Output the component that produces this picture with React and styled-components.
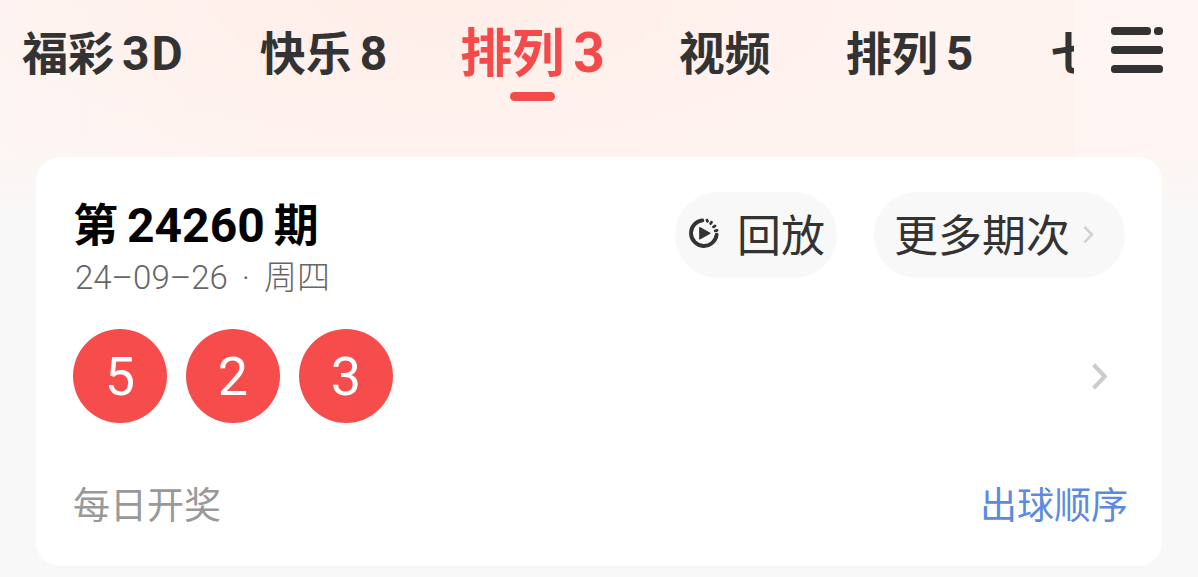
import React from "react";
import styled, { createGlobalStyle } from "styled-components";

const GlobalStyle = createGlobalStyle`
  html, body {
    margin: 0;
    padding: 0;
    background: #f8f8f8;
  }
  body {
    font-family: Roboto, "Noto Sans CJK SC", sans-serif;
  }
`;

//Data
const tabs = [
  { name: "福彩", num: "3D" },
  { name: "快乐", num: "8" },
  { name: "排列", num: "3", active: true },
  { name: "视频" },
  { name: "排列", num: "5" },
  { name: "七乐彩" },
];
const balls = ["5", "2", "3"];

const Chevron = ({ size, color }) => (
  <svg width={size} height={size * 1.6} viewBox="0 0 10 16" fill="none">
    <path d="M2 1.5 L8.2 8 L2 14.5" stroke={color} strokeWidth="2.3" />
  </svg>
);

const ReplayIcon = () => (
  <svg width="30" height="30" viewBox="3 3 28 28" fill="none">
    <path
      d="M15.5 5.2 A12 12 0 1 0 28.8 18.5"
      stroke="#333"
      strokeWidth="3.6"
      strokeLinecap="round"
    />
    <path
      d="M13 11.8 L22.6 17.2 L13 22.6 Z"
      fill="#333"
      stroke="#333"
      strokeWidth="1"
      strokeLinejoin="round"
    />
    <path
      d="M19.8 5 L20.3 6.1 M24 6.9 L23.2 8.2 M27.3 10.4 L25.9 11.3 M29.2 14.6 L27.5 15"
      stroke="#333"
      strokeWidth="2.6"
      strokeLinecap="round"
    />
  </svg>
);

const MenuIcon = () => (
  <svg width="52" height="46" viewBox="0 0 52 46" fill="#333">
    <rect x="0" y="0" width="40" height="8" rx="3.5" />
    <rect x="43" y="0" width="9" height="8" rx="3.5" />
    <rect x="0" y="19" width="52" height="8" rx="3.5" />
    <rect x="0" y="38" width="52" height="8" rx="3.5" />
  </svg>
);

const App = () => {
  return (
    <Page>
      <GlobalStyle />
      <Header>
        <TabScroller>
          {tabs.map((tab, i) => (
            <Tab key={i} $active={tab.active}>
              {tab.name}
              {tab.num && <TabNum $active={tab.active}>{tab.num}</TabNum>}
              {tab.active && <TabBar />}
            </Tab>
          ))}
        </TabScroller>
        <MenuArea>
          <MenuIcon />
        </MenuArea>
      </Header>
      <Card>
        <TopRow>
          <div>
            <Issue>
              第<IssueNum>24260</IssueNum>期
            </Issue>
            <DateLine>
              24–09–26<DateDot>·</DateDot>周四
            </DateLine>
          </div>
          <Actions>
            <Pill $pad="0 12px 4px 14px">
              <ReplayIcon />
              回放
            </Pill>
            <Pill $pad="0 55px 4px 20px">
              更多期次
              <PillArrow>
                <Chevron size={12} color="#d2d2d2" />
              </PillArrow>
            </Pill>
          </Actions>
        </TopRow>
        <BallRow>
          <Balls>
            {balls.map((b, i) => (
              <Ball key={i}>{b}</Ball>
            ))}
          </Balls>
          <Chevron size={18} color="#cccccc" />
        </BallRow>
        <Footer>
          <Daily>每日开奖</Daily>
          <OrderLink>出球顺序</OrderLink>
        </Footer>
      </Card>
    </Page>
  );
};

const Page = styled.div`
  width: 1198px;
  height: 577px;
  overflow: hidden;
  background: linear-gradient(180deg, #fef4f1 0, #fdf6f3 157px, #f8f8f8 215px);
`;

const Header = styled.div`
  display: flex;
  height: 157px;
  background: radial-gradient(
      ellipse 480px 170px at 440px 0,
      #ffeee8 0,
      rgba(255, 240, 235, 0) 100%
    ),
    linear-gradient(90deg, rgba(255, 244, 241, 0) 0, #fff3f0 260px);
`;

const TabScroller = styled.div`
  width: 1074px;
  display: flex;
  flex-shrink: 0;
  gap: 75px;
  padding-left: 22px;
  box-sizing: border-box;
  overflow: hidden;
`;

const Tab = styled.div`
  position: relative;
  flex-shrink: 0;
  height: 104px;
  line-height: 100px;
  white-space: nowrap;
  font-family: "Noto Sans CJK SC", sans-serif;
  font-weight: 700;
  font-size: ${(p) => (p.$active ? "52px" : "46px")};
  color: ${(p) => (p.$active ? "#f54a4a" : "#333333")};
  margin: ${(p) => (p.$active ? "0 -1px 0 -4px" : "0")};
`;

const TabNum = styled.span`
  font-family: Roboto, sans-serif;
  font-size: ${(p) => (p.$active ? "55px" : "48px")};
  letter-spacing: ${(p) => (p.$active ? "0" : "2px")};
  margin-left: ${(p) => (p.$active ? "9px" : "8px")};
`;

const TabBar = styled.div`
  position: absolute;
  left: 50px;
  bottom: 3px;
  width: 45px;
  height: 9px;
  border-radius: 5px;
  background: #f54a4a;
`;

const MenuArea = styled.div`
  flex: 1;
  display: flex;
  justify-content: flex-end;
  align-items: flex-start;
  padding: 27px 35px 0 0;
  background: #fff5f3;
  height: 130px;
`;

const Card = styled.div`
  margin: 0 36px;
  height: 409px;
  box-sizing: border-box;
  padding: 34px 37px 0;
  background: #fff;
  border-radius: 24px;
`;

const TopRow = styled.div`
  display: flex;
  justify-content: space-between;
  align-items: flex-start;
`;

const Issue = styled.div`
  font-family: "Noto Sans CJK SC", sans-serif;
  font-weight: 700;
  font-size: 45px;
  line-height: 64px;
  color: #000;
`;

const IssueNum = styled.span`
  font-family: Roboto, sans-serif;
  font-size: 48px;
  margin: 0 9px;
`;

const DateLine = styled.div`
  font-size: 33px;
  font-weight: 300;
  line-height: 40px;
  color: #666;
  margin-left: 2px;
`;

const DateDot = styled.span`
  margin: 0 14px;
`;

const Actions = styled.div`
  display: flex;
  gap: 37px;
  margin: 1px 0 0 0;
`;

const Pill = styled.div`
  position: relative;
  display: flex;
  align-items: center;
  gap: 18px;
  height: 86px;
  box-sizing: border-box;
  padding: ${(p) => p.$pad};
  border-radius: 43px;
  background: #f8f8f8;
  color: #333;
  font-family: "Noto Sans CJK SC", sans-serif;
  font-size: 44px;
`;

const PillArrow = styled.span`
  position: absolute;
  display: flex;
  right: 31px;
  top: 33px;
`;

const BallRow = styled.div`
  display: flex;
  align-items: center;
  justify-content: space-between;
  margin: 31px 0 0 0;
  padding-right: 17px;
`;

const Balls = styled.div`
  display: flex;
  gap: 19px;
`;

const Ball = styled.div`
  width: 94px;
  height: 94px;
  border-radius: 50%;
  display: flex;
  align-items: center;
  justify-content: center;
  background: #f64c4c;
  color: #fff;
  font-size: 54px;
`;

const Footer = styled.div`
  display: flex;
  justify-content: space-between;
  align-items: center;
  margin: 53px -3px 0 0;
  font-family: "Noto Sans CJK SC", sans-serif;
  font-size: 37px;
`;

const Daily = styled.span`
  color: #999;
`;

const OrderLink = styled.span`
  color: #5b8ae0;
`;

export default App;
